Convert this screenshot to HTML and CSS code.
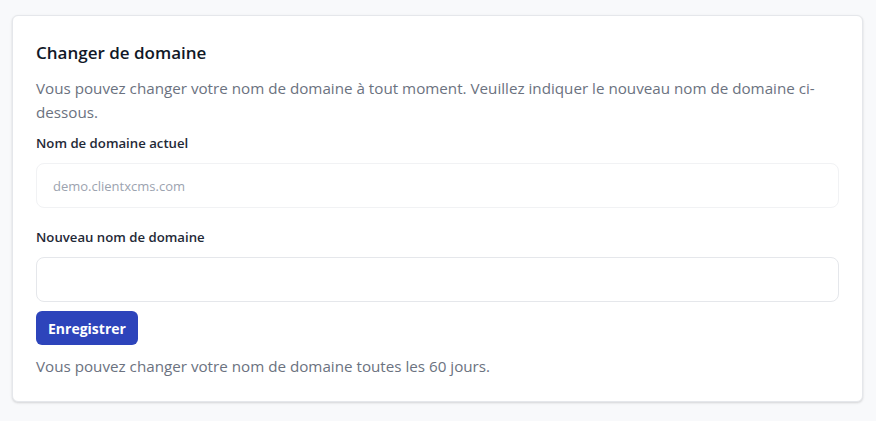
FILE: index.html
```html
<!DOCTYPE html>
<html lang="fr">
<head>
<meta charset="utf-8">
<title>Changer de domaine</title>
<link rel="stylesheet" href="styles.css">
</head>
<body>
<div class="page">
  <section class="card">
    <h2 class="card-title">Changer de domaine</h2>
    <p class="card-text">Vous pouvez changer votre nom de domaine à tout moment. Veuillez indiquer le nouveau nom de domaine ci-dessous.</p>
    <form class="form" onsubmit="return false">
      <label class="field-label" for="current">Nom de domaine actuel</label>
      <input class="field-input field-input--disabled" id="current" type="text" placeholder="demo.clientxcms.com" disabled>
      <label class="field-label field-label--spaced" for="domain">Nouveau nom de domaine</label>
      <input class="field-input" id="domain" type="text">
      <div class="actions">
        <button class="btn-primary" type="submit">Enregistrer</button>
      </div>
    </form>
    <p class="card-note">Vous pouvez changer votre nom de domaine toutes les 60 jours.</p>
  </section>
</div>
</body>
</html>
```

FILE: styles.css
```css
* { box-sizing: border-box; }
html, body {
  margin: 0;
  padding: 0;
  background: #f8f9fb;
  font-family: "Open Sans", "Noto Sans", "Liberation Sans", sans-serif;
}
.page {
  padding: 15px 13px 19px 12px;
}
.card {
  background: #ffffff;
  border: 1px solid #e5e7eb;
  border-radius: 6px;
  box-shadow: 0 1px 3px rgba(0,0,0,0.10), 0 1px 2px rgba(0,0,0,0.06);
  padding: 23px 23px 23px 23px;
}
.card-title {
  margin: 0 0 9px 0;
  font-size: 17px;
  line-height: 28px;
  font-weight: 600;
  color: #111827;
}
.card-text {
  margin: 0;
  font-size: 15.2px;
  line-height: 24px;
  color: #6b7280;
}
.form {
  display: flex;
  flex-direction: column;
  margin-top: 9px;
}
.field-label {
  font-size: 13.2px;
  line-height: 20px;
  font-weight: 600;
  color: #1f2937;
  margin-bottom: 10px;
}
.field-label--spaced {
  margin-top: 19px;
}
.field-input {
  height: 45px;
  width: 100%;
  border: 1px solid #e5e7eb;
  border-radius: 8px;
  padding: 0 16px;
  font-size: 13px;
  font-family: inherit;
  color: #1f2937;
  background: #ffffff;
  outline: none;
}
.field-input--disabled {
  border-color: #f1f2f4;
}
.field-input::placeholder {
  color: #9ca3af;
}
.actions {
  margin-top: 9px;
  display: flex;
}
.btn-primary {
  height: 34px;
  padding: 0 12px;
  border: none;
  border-radius: 6px;
  background: #2d44bb;
  color: #ffffff;
  font-family: inherit;
  font-size: 14px;
  font-weight: 700;
  cursor: pointer;
}
.card-note {
  margin: 9px 0 0 0;
  font-size: 15.2px;
  line-height: 24px;
  color: #6b7280;
}
```
